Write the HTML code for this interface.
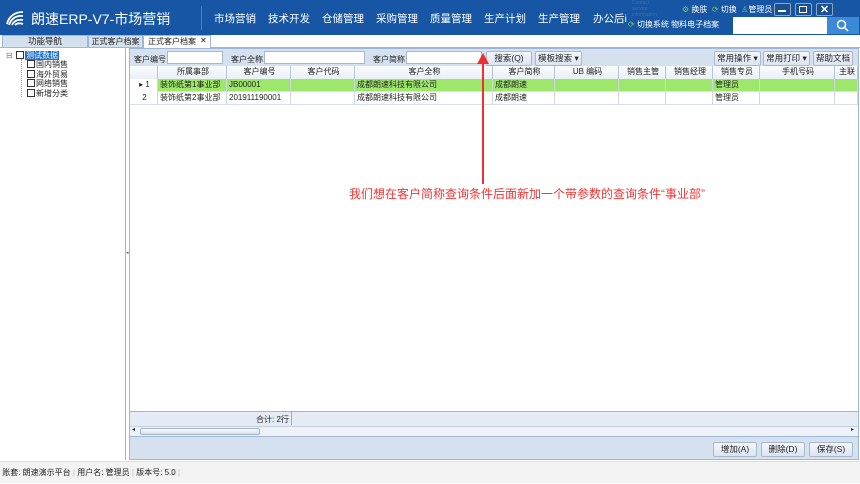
<!DOCTYPE html>
<html><head><meta charset="utf-8">
<style>
*{margin:0;padding:0;box-sizing:border-box}
body{width:860px;height:483px;overflow:hidden;background:#fff;font-family:"Liberation Sans","Noto Sans CJK SC",sans-serif;font-size:9px;color:#222;position:relative}
.a{position:absolute}
.hdr{left:0;top:0;width:860px;height:35px;background:#1656a4}
.menu{top:11px;color:#fff;font-size:10.5px}
.tabs{left:0;top:35px;width:860px;height:13px;background:#fff;border-bottom:1px solid #9fb6d6}
.tab{top:35px;height:13px;background:#d5e0ee;border:1px solid #9fb6d6;font-size:8.5px;text-align:center;line-height:11px;white-space:nowrap;overflow:hidden}
.left{left:0;top:48px;width:126px;height:412px;background:#fff;border-right:1px solid #9fb6d6}
.content{left:129px;top:48px;width:730px;height:412px;background:#d6e1ef;border:1px solid #9fb6d6}
.inp{background:#fff;border:1px solid #a8b8cc;height:13px}
.btn{background:linear-gradient(#f4f7fb,#dbe4f0);border:1px solid #a8b8cc;border-radius:2px;text-align:center;line-height:13px;height:15px;font-size:8.5px}
.grid{left:130px;top:66px;width:728px;height:345px;background:#fff}
.row{position:absolute;left:0;width:728px;height:13px;border-bottom:1px solid #d8dfe8}
.c{position:absolute;top:0;height:13px;border-right:1px solid #d0d8e4;line-height:12px;padding-left:2px;white-space:nowrap;overflow:hidden;font-size:8px}
.h .c{text-align:center;background:linear-gradient(#fafcfe,#eaf0f7);border-right:1px solid #b8c6d8}
.status{left:0;top:461px;width:860px;height:22px;background:#f3f3f3;border-top:1px solid #ddd;font-size:8px;line-height:22px}
.cb{display:inline-block;width:8px;height:8px;border:1px solid #333;background:#fff;vertical-align:-1px;margin-right:1px}
</style></head><body>
<div class="a hdr"></div>
<svg class="a" style="left:5px;top:10px" width="20" height="16" viewBox="0 0 20 16"><path d="M2 14 C4 6 10 2 18 2 M4 15 C6 9 11 5 18 6 M7 15 C9 11 13 9 18 10 M10 15 C12 13 15 13 18 14" stroke="#fff" stroke-width="1.8" fill="none"/></svg>
<div class="a" style="left:31px;top:9px;color:#fff;font-size:14px">朗速ERP-V7-市场营销</div>
<div class="a" style="left:201px;top:6px;width:1px;height:24px;background:#4a7fc0"></div>
<div class="a menu" style="left:214px">市场营销</div>
<div class="a menu" style="left:268px">技术开发</div>
<div class="a menu" style="left:322px">仓储管理</div>
<div class="a menu" style="left:376px">采购管理</div>
<div class="a menu" style="left:430px">质量管理</div>
<div class="a menu" style="left:484px">生产计划</div>
<div class="a menu" style="left:538px">生产管理</div>
<div class="a menu" style="left:593px">办公后i</div>
<div class="a" style="left:632px;top:0;color:#3d6fae;font-size:5px;line-height:6px">Contact<br>service<br>information</div>
<div class="a" style="left:682px;top:4px;color:#fff;font-size:8px"><span style="color:#7c5">⚙</span> 换肤 &nbsp;<span style="color:#7c5">⟳</span> 切换 &nbsp;<span style="color:#7c5">♙</span>管理员</div>
<div class="a" style="left:628px;top:19px;color:#fff;font-size:8px"><span style="color:#7c5">⟳</span> 切换系统 物料电子档案</div>
<div class="a" style="left:774px;top:3px;width:17px;height:13px;border:1px solid #8ab;background:#1a4f94;border-radius:2px"></div>
<div class="a" style="left:778px;top:10px;width:8px;height:2px;background:#fff"></div>
<div class="a" style="left:795px;top:3px;width:17px;height:13px;border:1px solid #8ab;background:#1a4f94;border-radius:2px"></div>
<div class="a" style="left:799px;top:6px;width:8px;height:7px;border:1.5px solid #fff"></div>
<div class="a" style="left:816px;top:3px;width:17px;height:13px;border:1px solid #8ab;background:#1a4f94;border-radius:2px;color:#fff;font-size:11px;text-align:center;line-height:12px;font-weight:bold">✕</div>
<div class="a" style="left:733px;top:17px;width:94px;height:17px;background:#fff"></div>
<div class="a" style="left:827px;top:17px;width:32px;height:17px;background:#3a8ad8"></div>
<svg class="a" style="left:836px;top:19px" width="13" height="13"><circle cx="5.5" cy="5.5" r="4" stroke="#fff" stroke-width="1.5" fill="none"/><path d="M8.5 8.5 L12 12" stroke="#fff" stroke-width="1.5"/></svg>

<div class="a tabs"></div>
<div class="a tab" style="left:2px;width:86px">功能导航</div>
<div class="a tab" style="left:88px;width:55px;font-size:8px">正式客户档案</div>
<div class="a tab" style="left:143px;width:68px;background:#fff;border-bottom:none;text-align:left;padding-left:4px;font-size:8px">正式客户档案</div>
<div class="a" style="left:200px;top:36px;font-size:8px">✕</div>

<div class="a left"></div>
<div class="a" style="left:6px;top:51px;font-size:8px;color:#777">⊟</div>
<div class="a" style="left:16px;top:50px;font-size:8px"><span class="cb"></span><span style="background:#1f6fd0;color:#fff;padding:0 1px">测试数据</span></div>
<div class="a" style="left:21px;top:59px;width:1px;height:38px;border-left:1px dotted #999"></div>
<div class="a" style="left:27px;top:60px;font-size:8px;line-height:9.5px"><span class="cb"></span>国内销售<br><span class="cb"></span>海外贸易<br><span class="cb"></span>网络销售<br><span class="cb"></span>新增分类</div>
<div class="a" style="left:126px;top:250px;font-size:5px;color:#666">◂</div>

<div class="a content"></div>
<div class="a" style="left:134px;top:54px;font-size:8px">客户编号</div>
<div class="a inp" style="left:167px;top:51px;width:56px"></div>
<div class="a" style="left:231px;top:54px;font-size:8px">客户全称</div>
<div class="a inp" style="left:264px;top:51px;width:101px"></div>
<div class="a" style="left:373px;top:54px;font-size:8px">客户简称</div>
<div class="a inp" style="left:406px;top:51px;width:76px"></div>
<div class="a btn" style="left:486px;top:51px;width:46px">搜索(Q)</div>
<div class="a btn" style="left:535px;top:51px;width:47px">模板搜索 ▾</div>
<div class="a btn" style="left:714px;top:51px;width:47px">常用操作 ▾</div>
<div class="a btn" style="left:763px;top:51px;width:47px">常用打印 ▾</div>
<div class="a btn" style="left:813px;top:51px;width:40px">帮助文档</div>

<div class="a grid">
<div class="row h" style="top:0;background:#eef2f8">
<div class="c" style="left:0;width:28px"></div><div class="c" style="left:28px;width:69px">所属事部</div><div class="c" style="left:97px;width:64px">客户编号</div><div class="c" style="left:161px;width:64px">客户代码</div><div class="c" style="left:225px;width:138px">客户全称</div><div class="c" style="left:363px;width:62px">客户简称</div><div class="c" style="left:425px;width:64px">UB 编码</div><div class="c" style="left:489px;width:47px">销售主管</div><div class="c" style="left:536px;width:47px">销售经理</div><div class="c" style="left:583px;width:47px">销售专员</div><div class="c" style="left:630px;width:75px">手机号码</div><div class="c" style="left:705px;width:23px">主联</div>
</div>
<div class="row" style="top:13px;background:#9de86a">
<div class="c" style="left:0;width:28px;background:#fff;text-align:center">▸ 1</div><div class="c" style="left:28px;width:69px">装饰纸第1事业部</div><div class="c" style="left:97px;width:64px">JB00001</div><div class="c" style="left:161px;width:64px"></div><div class="c" style="left:225px;width:138px">成都朗速科技有限公司</div><div class="c" style="left:363px;width:62px">成都朗速</div><div class="c" style="left:425px;width:64px"></div><div class="c" style="left:489px;width:47px"></div><div class="c" style="left:536px;width:47px"></div><div class="c" style="left:583px;width:47px">管理员</div><div class="c" style="left:630px;width:75px"></div><div class="c" style="left:705px;width:23px"></div>
</div>
<div class="row" style="top:26px">
<div class="c" style="left:0;width:28px;text-align:center">2</div><div class="c" style="left:28px;width:69px">装饰纸第2事业部</div><div class="c" style="left:97px;width:64px">201911190001</div><div class="c" style="left:161px;width:64px"></div><div class="c" style="left:225px;width:138px">成都朗速科技有限公司</div><div class="c" style="left:363px;width:62px">成都朗速</div><div class="c" style="left:425px;width:64px"></div><div class="c" style="left:489px;width:47px"></div><div class="c" style="left:536px;width:47px"></div><div class="c" style="left:583px;width:47px">管理员</div><div class="c" style="left:630px;width:75px"></div><div class="c" style="left:705px;width:23px"></div>
</div>
</div>

<div class="a" style="left:130px;top:411px;width:728px;height:15px;background:#e4ebf4;border-top:1px solid #9fb6d6"></div>
<div class="a" style="left:256px;top:414px;font-size:8px">合计: 2行</div>
<div class="a" style="left:291px;top:412px;width:1px;height:13px;background:#aaa"></div>
<div class="a" style="left:130px;top:426px;width:728px;height:11px;background:#eef2f7;border-top:1px solid #c5d0de;border-bottom:1px solid #9fb6d6"></div>
<div class="a" style="left:140px;top:428px;width:120px;height:7px;background:linear-gradient(#fafcfe,#d6e0ec);border:1px solid #9fb6d6;border-radius:2px"></div>
<div class="a" style="left:132px;top:426px;font-size:6px">◂</div>
<div class="a" style="left:851px;top:426px;font-size:6px">▸</div>
<div class="a btn" style="left:713px;top:442px;width:44px">增加(A)</div>
<div class="a btn" style="left:761px;top:442px;width:44px">删除(D)</div>
<div class="a btn" style="left:809px;top:442px;width:44px">保存(S)</div>

<div class="a status">&nbsp;账套: 朗速演示平台 <span style="color:#bbb">|</span> 用户名: 管理员 <span style="color:#bbb">|</span> 版本号: 5.0 <span style="color:#bbb">|</span></div>

<div class="a" style="left:482px;top:62px;width:2px;height:122px;background:#f03030"></div>
<svg class="a" style="left:477px;top:53px" width="12" height="12"><path d="M6 0 L12 11 L0 11Z" fill="#f03030"/></svg>
<div class="a" style="left:349px;top:185px;color:#f03434;font-size:12px;white-space:nowrap">我们想在客户简称查询条件后面新加一个带参数的查询条件“事业部”</div>
</body></html>
